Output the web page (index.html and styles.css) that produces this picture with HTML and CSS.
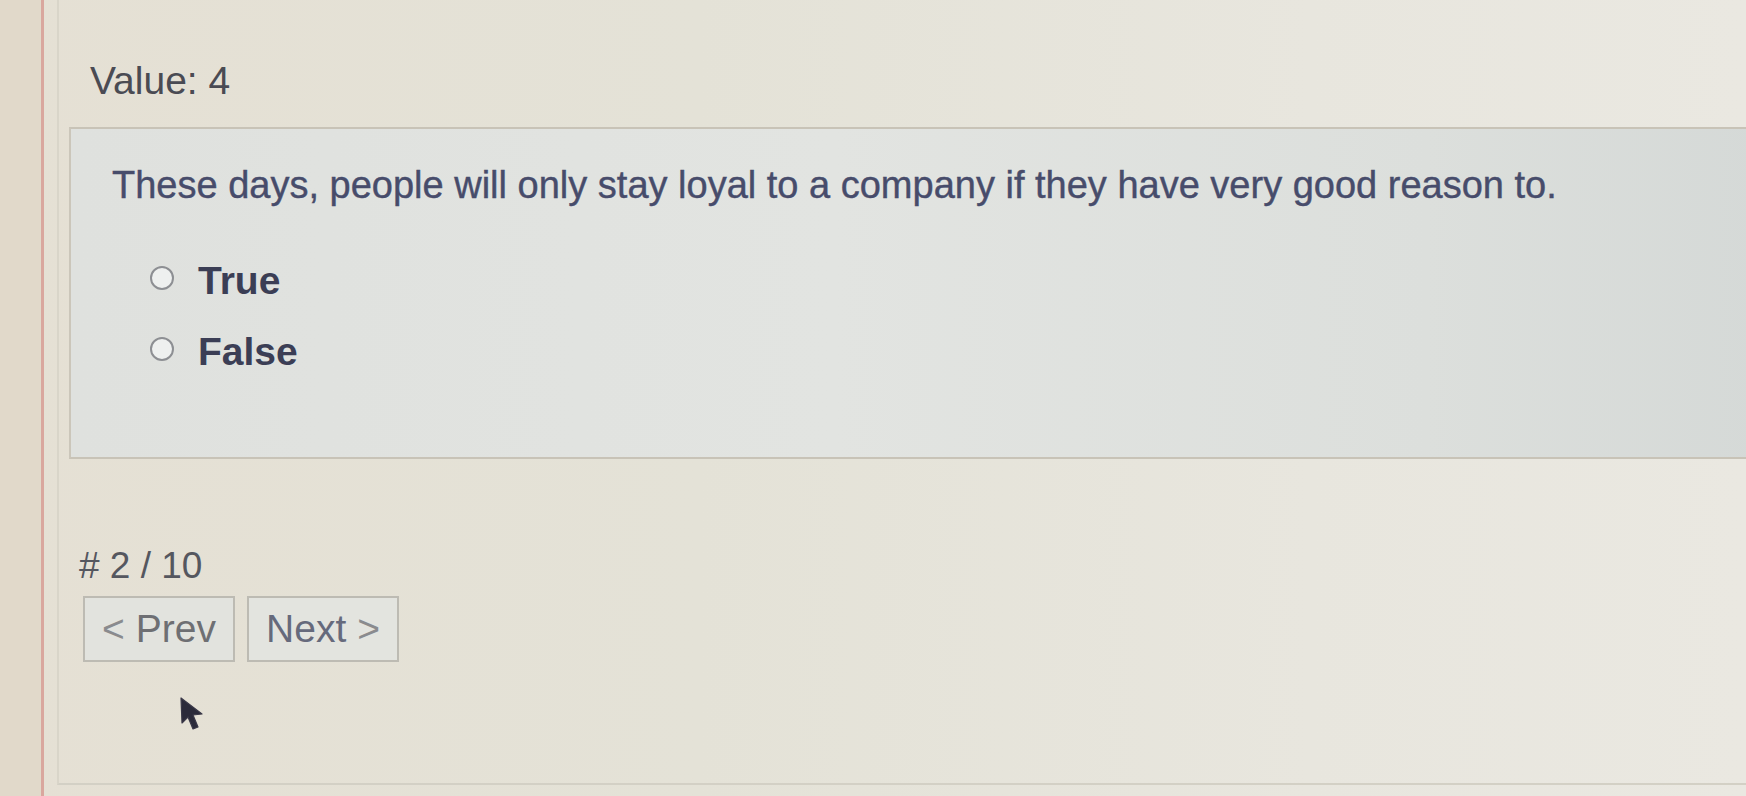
FILE: index.html
```html
<!DOCTYPE html>
<html lang="en">
<head>
<meta charset="utf-8">
<title>Quiz</title>
<link rel="stylesheet" href="styles.css">
</head>
<body>
<div class="strip"></div>
<div class="page">
  <div class="panel">
    <div class="value">Value: 4</div>
    <div class="qbox">
      <p class="question">These days, people will only stay loyal to a company if they have very good reason to.</p>
      <label class="opt"><span class="radio"></span><span class="opt-text">True</span></label>
      <label class="opt"><span class="radio"></span><span class="opt-text">False</span></label>
    </div>
    <div class="counter"># 2 / 10</div>
    <div class="nav">
      <button class="btn btn-prev"><span class="arrow">&lt;</span> Prev</button>
      <button class="btn btn-next">Next <span class="arrow">&gt;</span></button>
    </div>
  </div>
</div>
<svg class="cursor" width="26" height="36" viewBox="0 0 26 36"><path d="M2 1 L3 26 L9 20 L14 32 L19 30 L14 18 L23 17 Z" fill="#2b2a3a" stroke="#3a3848" stroke-width="1.2" stroke-linejoin="round"/></svg>
</body>
</html>
```
FILE: styles.css
```css
html, body {
  margin: 0;
  height: 100%;
}
body {
  display: flex;
  background: linear-gradient(90deg, #e5e0d4 0%, #e4e2d7 40%, #e8e6de 75%, #eae8e1 100%);
  font-family: "Liberation Sans", Arial, sans-serif;
  overflow: hidden;
  position: relative;
}
.strip {
  width: 41px;
  flex: none;
  background: #e1d9ca;
  border-right: 3px solid #d9a79e;
}
.page {
  flex: 1;
  padding-left: 13px;
}
.panel {
  height: 785px;
  box-sizing: border-box;
  border-left: 2px solid #d9d5c9;
  border-bottom: 2px solid #d3d0c5;
  padding: 58px 0 0 10px;
}
.value {
  font-size: 39px;
  color: #4a4b53;
  margin-left: 21px;
  line-height: 46px;
}
.qbox {
  margin-top: 23px;
  background: linear-gradient(90deg, #dfe1de 0%, #e2e4e1 45%, #dcdfdc 80%, #d5d9d7 100%);
  border-top: 2px solid #c8c3b7;
  border-left: 2px solid #cbc6ba;
  border-bottom: 2px solid #c8c3b7;
  padding: 34px 0 70px 41px;
  margin-right: -20px;
}
.question {
  margin: 0 0 38px;
  font-size: 38px;
  line-height: 44px;
  color: #474c6b;
  -webkit-text-stroke: 0.4px #474c6b;
  white-space: nowrap;
}
.opt {
  display: flex;
  align-items: center;
  height: 71px;
  margin-left: 38px;
}
.radio {
  width: 20px;
  height: 20px;
  border: 2px solid #8d8f93;
  border-radius: 50%;
  background: #eef0ef;
  margin-right: 24px;
  margin-bottom: 6px;
  flex: none;
}
.opt-text {
  font-size: 39px;
  line-height: 44px;
  font-weight: bold;
  color: #3b3e55;
}
.counter {
  margin-top: 86px;
  margin-left: 10px;
  font-size: 37px;
  color: #55575f;
  line-height: 42px;
}
.nav {
  display: flex;
  gap: 12px;
  margin-top: 9px;
  margin-left: 14px;
}
.btn {
  width: 152px;
  height: 66px;
  box-sizing: border-box;
  border: 2px solid #bdbbb3;
  background: #e2e3de;
  font-family: "Liberation Sans", Arial, sans-serif;
  font-size: 39px;
  color: #6e6f73;
  padding: 0;
}
.btn-next {
  color: #666a7c;
  background: #e3e4df;
}
.arrow {
  color: #8a8b8e;
}
.cursor {
  position: absolute;
  left: 179px;
  top: 697px;
}
```
